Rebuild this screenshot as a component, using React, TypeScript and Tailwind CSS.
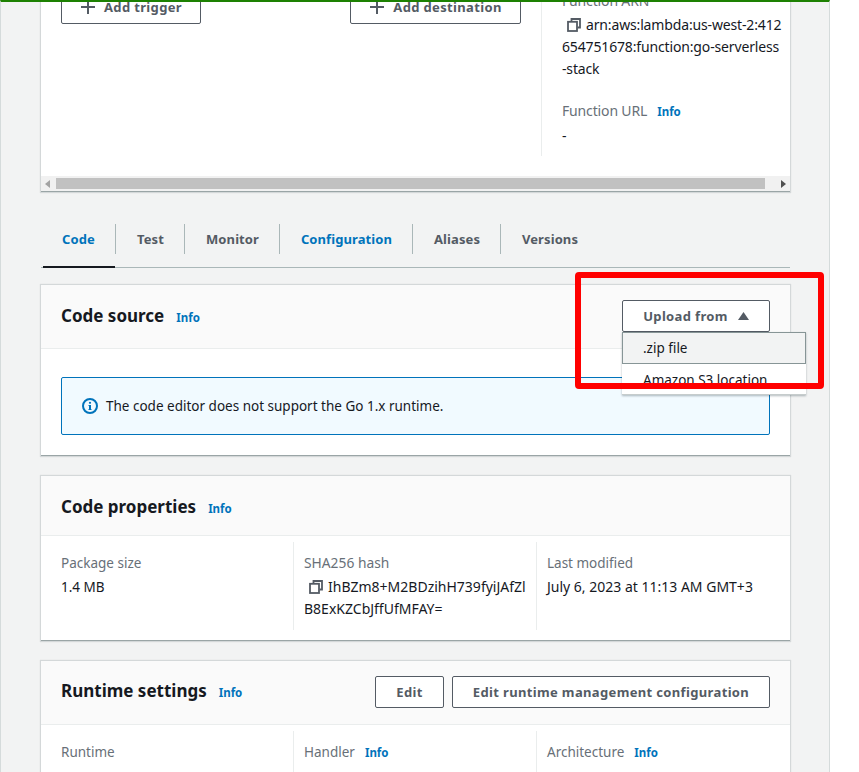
import React from "react";

const font = { fontFamily: '"Noto Sans", sans-serif' };

function Info({ className = "" }: { className?: string }) {
  return <span className={`text-[11.5px] leading-[16px] font-bold text-[#0073bb] ${className}`}>Info</span>;
}

function CopyIcon() {
  return (
    <svg width="14" height="14" viewBox="0 0 14 14" fill="none" stroke="#545b64" strokeWidth="1.8" className="shrink-0">
      <path d="M4.5 3.5V1h8.5v8.5h-2.5" />
      <rect x="1" y="3.8" width="9" height="9.2" />
    </svg>
  );
}

function OutlineButton({ children, className = "" }: { children: React.ReactNode; className?: string }) {
  return (
    <div className={`h-[32px] flex items-center justify-center border border-[#545b64] rounded-[2px] bg-white text-[13px] font-bold tracking-[0.35px] text-[#545b64] ${className}`}>
      {children}
    </div>
  );
}

function Plus() {
  return (
    <svg width="16" height="16" viewBox="0 0 16 16" stroke="#545b64" strokeWidth="2" className="shrink-0">
      <path d="M8 1v14M1 8h14" />
    </svg>
  );
}

function Tab({ label, active, blue, last, w }: { label: string; active?: boolean; blue?: boolean; last?: boolean; w: string }) {
  return (
    <div className={`relative ${w} h-[44px] pb-[15px] flex items-center justify-center text-[13px] font-bold tracking-[0.1px] ${blue ? "text-[#0073bb]" : "text-[#545b64]"} ${last ? "" : "after:absolute after:right-0 after:top-0 after:h-[30px] after:w-px after:bg-[#aab7b8]"}`}>
      {label}
      {active && <div className="absolute left-[2px] right-[1px] bottom-0 h-[2px] bg-[#16191f]" />}
    </div>
  );
}

function CardHeader({ title, h, children, up = "" }: { title: string; h: string; children?: React.ReactNode; up?: string }) {
  return (
    <div className={`${h} flex items-center justify-between pl-[20px] pr-[20px] bg-[#fafafa] border-b border-[#eaeded]`}>
      <div className={`flex items-baseline ${up}`}>
        <span className="text-[17px] leading-[22px] font-bold text-[#16191f]">{title}</span>
        <Info className="ml-[12px]" />
      </div>
      {children}
    </div>
  );
}

function Col({ children, w, last, first }: { children: React.ReactNode; w: string; last?: boolean; first?: boolean }) {
  return (
    <div className={`${w} shrink-0 ${last ? "" : "border-r border-[#eaeded]"} ${first ? "pl-[20px]" : "pl-[10px]"} pt-[10px]`}>
      {children}
    </div>
  );
}

const card = "bg-white border-b border-[#9aa5a6] shadow-[0_0_1px_1px_rgba(0,28,36,0.12)]";

export default function App() {
  return (
    <div style={font} className="relative w-[859px] h-[772px] overflow-hidden bg-white text-[13.5px] leading-[22px] text-[#16191f]">
      <div className="relative w-[830px] h-full bg-[#f2f3f3] border-l border-l-[#d5dbdb] border-r border-r-[#d5dbdb] border-t-2 border-t-[#1d8102] overflow-hidden">
        <div className="ml-[40px] w-[749px] -mt-[10px]">
          <div className={`${card} h-[200px] flex flex-col`}>
            <div className="flex-1 flex min-h-0">
              <div className="w-[500px] shrink-0 pl-[20px] flex items-start">
                <OutlineButton className="w-[140px] gap-[8px] pb-[2px]"><Plus /><span>Add trigger</span></OutlineButton>
                <OutlineButton className="w-[171px] gap-[8px] ml-[149px] pb-[2px]"><Plus /><span>Add destination</span></OutlineButton>
              </div>
              <div className="h-[164px] w-[249px] border-l border-[#eaeded] pl-[20px] text-[14px] tracking-[-0.15px]">
                <div className="text-[#687078] h-[24px] -mt-[2px]">Function ARN</div>
                <div className="whitespace-nowrap">
                  <span className="inline-block align-[-2px] ml-[5px] mr-[5px]"><CopyIcon /></span>
                  arn:aws:lambda:us-west-2:412<br />654751678:function:go-serverless<br />-stack
                </div>
                <div className="mt-[20px] flex items-baseline text-[#687078]">Function URL<Info className="ml-[10px] tracking-normal" /></div>
                <div className="mt-[3px]">-</div>
              </div>
            </div>
            <div className="h-[15px] bg-[#f1f1f1] flex items-center relative">
              <svg width="6" height="8" viewBox="0 0 6 8" className="absolute left-[4px]"><path d="M5 0v8L0 4z" fill="#a3a3a3" /></svg>
              <div className="ml-[15px] w-[709px] h-[11px] bg-[#c1c1c1]" />
              <svg width="6" height="8" viewBox="0 0 6 8" className="absolute right-[4px]"><path d="M1 0v8l5-4z" fill="#505050" /></svg>
            </div>
          </div>

          <div className="mt-[32px] h-[44px] flex border-b border-[#aab7b8]">
            <Tab label="Code" active blue w="w-[75px]" />
            <Tab label="Test" w="w-[69px]" />
            <Tab label="Monitor" w="w-[95px]" />
            <Tab label="Configuration" blue w="w-[133px]" />
            <Tab label="Aliases" w="w-[88px]" />
            <Tab label="Versions" last w="w-[98px]" />
          </div>

          <div className={`${card} mt-[17px] h-[171px]`}>
            <CardHeader title="Code source" h="h-[64px]" up="-mt-[2px]">
              <OutlineButton className="w-[148px] gap-[10px] -mt-[1px]">
                <span>Upload from</span>
                <svg width="11" height="8" viewBox="0 0 11 8"><path d="M5.5 0l5.5 8H0z" fill="#545b64" /></svg>
              </OutlineButton>
            </CardHeader>
            <div className="px-[20px] pt-[28px]">
              <div className="h-[58px] bg-[#f1faff] border border-[#0073bb] rounded-[2px] flex items-center pl-[20px]">
                <svg width="16" height="16" viewBox="0 0 16 16" fill="none" className="shrink-0 mr-[8px]">
                  <circle cx="8" cy="8" r="7" stroke="#0073bb" strokeWidth="2" />
                  <path d="M8 7v5" stroke="#0073bb" strokeWidth="2" />
                  <path d="M6.5 7.5H8M6.5 11.5h3" stroke="#0073bb" strokeWidth="1" />
                  <circle cx="8" cy="4.8" r="1.1" fill="#0073bb" />
                </svg>
                <span>The code editor does not support the Go 1.x runtime.</span>
              </div>
            </div>
          </div>

          <div className={`${card} mt-[20px] h-[165px]`}>
            <CardHeader title="Code properties" h="h-[60px]" up="mt-[2px]" />
            <div className="flex h-[88px] mt-[7px] -translate-y-px">
              <Col w="w-[253px]" first>
                <div className="text-[#687078]">Package size</div>
                <div className="mt-[2px]">1.4 MB</div>
              </Col>
              <Col w="w-[243px]">
                <div className="text-[#687078] text-[13.8px]">SHA256 hash</div>
                <div className="mt-[2px] whitespace-nowrap text-[14px]">
                  <span className="inline-block align-[-2px] ml-[5px] mr-[5px]"><CopyIcon /></span>
                  IhBZm8+M2BDzihH739fyiJAfZl<br />B8ExKZCbJffUfMFAY=
                </div>
              </Col>
              <Col w="w-[253px]" last>
                <div className="text-[#687078]">Last modified</div>
                <div className="mt-[2px] whitespace-nowrap text-[14px]">July 6, 2023 at 11:13 AM GMT+3</div>
              </Col>
            </div>
          </div>

          <div className={`${card} mt-[20px] h-[200px]`}>
            <CardHeader title="Runtime settings" h="h-[64px]" up="-mt-[4px]">
              <div className="flex gap-[8px] -mt-[1px]">
                <OutlineButton className="w-[69px]">Edit</OutlineButton>
                <OutlineButton className="w-[318px]">Edit runtime management configuration</OutlineButton>
              </div>
            </CardHeader>
            <div className="flex h-[88px] mt-[6px]">
              <Col w="w-[253px]" first><div className="text-[#687078]">Runtime</div></Col>
              <Col w="w-[243px]">
                <div className="flex items-baseline text-[#687078]">Handler<Info className="ml-[10px]" /></div>
              </Col>
              <Col w="w-[253px]" last>
                <div className="flex items-baseline text-[#687078]">Architecture<Info className="ml-[10px]" /></div>
              </Col>
            </div>
          </div>
        </div>
      </div>

      <div className="absolute left-[622px] top-[332px] w-[184px] h-[63px] bg-white border-b border-[#c6cccc] shadow-[0_1px_2px_rgba(0,28,36,0.3)]">
        <div className="h-[32px] bg-[#f2f3f3] border border-[#879596] pl-[20px] flex items-center">.zip file</div>
        <div className="h-[32px] pl-[21px] flex items-center">Amazon S3 location</div>
      </div>

      <div className="absolute left-[575px] top-[272px] w-[249px] h-[117px] border-[6px] border-[#ff0000] rounded-[4px]" />
    </div>
  );
}
